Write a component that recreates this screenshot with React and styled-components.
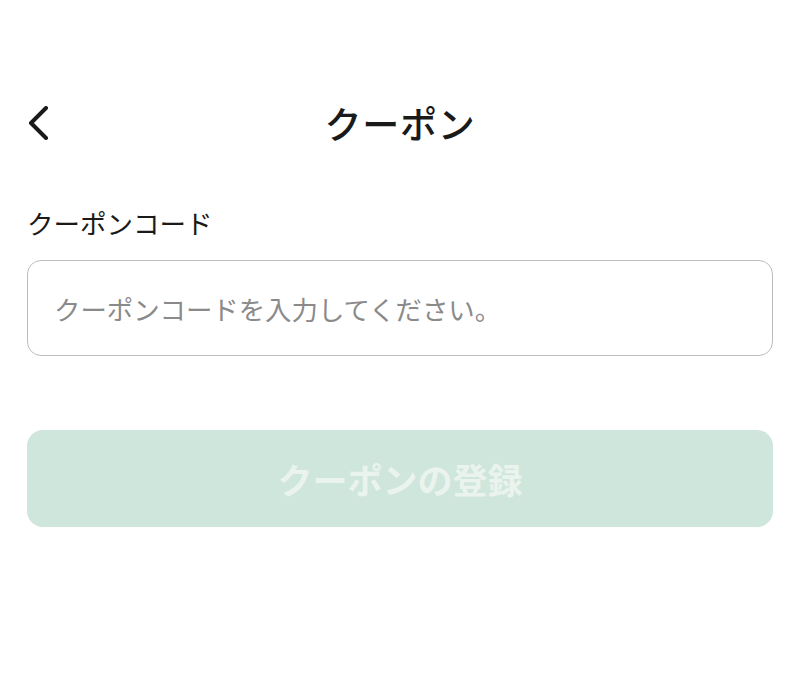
import React from 'react';
import styled, { createGlobalStyle } from 'styled-components';

const Global = createGlobalStyle`
  body {
    margin: 0;
    background: #ffffff;
    font-family: "Noto Sans CJK JP", "Noto Sans", sans-serif;
  }
`;

const Page = styled.div`
  width: 800px;
  height: 680px;
  padding: 96px 27px 0;
  box-sizing: border-box;
  display: flex;
  flex-direction: column;
`;

const Header = styled.header`
  position: relative;
  height: 54px;
  display: flex;
  align-items: center;
  justify-content: center;
`;

const BackButton = styled.button`
  position: absolute;
  left: 0;
  top: 50%;
  transform: translateY(-50%);
  background: none;
  border: none;
  padding: 0;
  width: 30px;
  height: 40px;
  display: flex;
  align-items: center;
  cursor: pointer;
`;

const Title = styled.h1`
  margin: 0;
  font-size: 37px;
  font-weight: 500;
  color: #1a1a1a;
  letter-spacing: 0.8px;
`;

const Label = styled.label`
  display: block;
  margin-top: 57px;
  font-size: 26.5px;
  line-height: 31px;
  color: #1a1a1a;
`;

const Input = styled.input`
  margin-top: 22px;
  height: 96px;
  width: 100%;
  box-sizing: border-box;
  border: 1.5px solid #bdbdbd;
  border-radius: 14px;
  padding: 0 26px;
  font-family: inherit;
  font-size: 26.4px;
  color: #1a1a1a;
  outline: none;

  &::placeholder {
    color: #8a8a8a;
  }
`;

const SubmitButton = styled.button`
  margin-top: 74px;
  height: 97px;
  width: 100%;
  border: none;
  border-radius: 16px;
  background: ${p => (p.disabled ? '#cfe6dc' : '#3fb08a')};
  color: ${p => (p.disabled ? '#eaf3ee' : '#ffffff')};
  font-family: inherit;
  font-size: 35px;
  font-weight: 700;
`;

export default function App() {
  return (
    <>
      <Global />
      <Page>
        <Header>
          <BackButton aria-label="戻る">
            <svg width="24" height="34" viewBox="0 0 24 34" fill="none">
              <path
                d="M19 2 L4 17 L19 32"
                stroke="#1a1a1a"
                strokeWidth="4"
                strokeLinecap="round"
                strokeLinejoin="round"
              />
            </svg>
          </BackButton>
          <Title>クーポン</Title>
        </Header>
        <Label htmlFor="coupon">クーポンコード</Label>
        <Input id="coupon" placeholder="クーポンコードを入力してください。" />
        <SubmitButton disabled>クーポンの登録</SubmitButton>
      </Page>
    </>
  );
}
